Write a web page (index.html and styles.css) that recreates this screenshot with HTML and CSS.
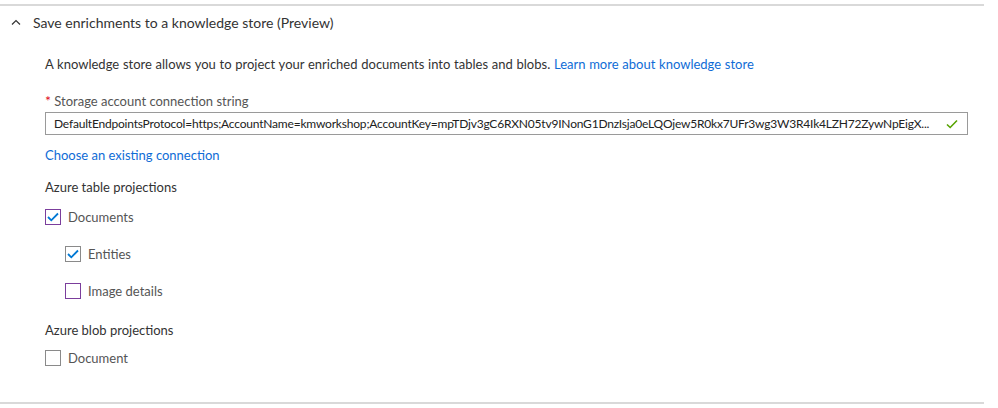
FILE: index.html
```html
<!DOCTYPE html>
<html>
<head>
<meta charset="utf-8">
<link rel="stylesheet" href="styles.css">
</head>
<body>
<div class="section">
  <div class="header">
    <svg class="chevron" width="10" height="6" viewBox="0 0 10 6"><path d="M1 5.5 L5 1.5 L9 5.5" fill="none" stroke="#333" stroke-width="1.2"/></svg>
    <span class="title">Save enrichments to a knowledge store (Preview)</span>
  </div>
  <div class="content">
    <p class="desc">A knowledge store allows you to project your enriched documents into tables and blobs. <a class="link">Learn more about knowledge store</a></p>
    <div class="label"><span class="req">*</span> Storage account connection string</div>
    <div class="input">
      <span class="value">DefaultEndpointsProtocol=https;AccountName=kmworkshop;AccountKey=mpTDjv3gC6RXN05tv9INonG1DnzIsja0eLQOjew5R0kx7UFr3wg3W3R4Ik4LZH72ZywNpEigX...</span>
      <svg class="ok" width="12" height="10" viewBox="0 0 12 10"><path d="M1 5.5 L4.2 8.5 L11 1.5" fill="none" stroke="#57a300" stroke-width="1.6"/></svg>
    </div>
    <a class="link choose">Choose an existing connection</a>
    <div class="group">Azure table projections</div>
    <div class="check lvl0">
      <span class="box focus"><svg width="12" height="10" viewBox="0 0 12 10"><path d="M1 5 L4.3 8.3 L11 1.5" fill="none" stroke="#0078d4" stroke-width="1.8"/></svg></span>
      <span class="clabel">Documents</span>
    </div>
    <div class="check lvl1">
      <span class="box"><svg width="12" height="10" viewBox="0 0 12 10"><path d="M1 5 L4.3 8.3 L11 1.5" fill="none" stroke="#0078d4" stroke-width="1.8"/></svg></span>
      <span class="clabel">Entities</span>
    </div>
    <div class="check lvl1">
      <span class="box focus"></span>
      <span class="clabel">Image details</span>
    </div>
    <div class="group blob">Azure blob projections</div>
    <div class="check lvl0 last">
      <span class="box"></span>
      <span class="clabel">Document</span>
    </div>
  </div>
</div>
</body>
</html>
```
FILE: styles.css
```css
html, body {
  margin: 0;
  padding: 0;
  background: #fff;
}
body {
  font-family: "Segoe UI", Lato, "Open Sans", sans-serif;
  color: #444;
  font-size: 13px;
}
.section {
  margin-top: 4px;
  width: 984px;
  height: 400px;
  border-top: 2px solid #d9d9d9;
  border-bottom: 2px solid #d9d9d9;
  box-sizing: border-box;
}
.header {
  display: flex;
  align-items: center;
  height: 32px;
  padding-left: 11px;
}
.chevron {
  margin-right: 12px;
}
.title {
  font-size: 14px;
  color: #333;
}
.content {
  padding-left: 45px;
  padding-right: 16px;
}
.desc {
  margin: 16px 0 0;
  line-height: 20px;
  color: #333;
  word-spacing: 0.4px;
}
.link {
  color: #0f6cd6;
  cursor: pointer;
}
.label {
  margin-top: 18px;
  line-height: 18px;
  color: #555;
}
.req {
  color: #e00b1c;
  font-size: 14px;
}
.input {
  margin-top: 2px;
  height: 23px;
  border: 1px solid #9a9a9a;
  box-sizing: border-box;
  width: 923px;
  display: flex;
  align-items: center;
  padding: 0 9px 0 8px;
  gap: 10px;
}
.value {
  flex: 1;
  min-width: 0;
  white-space: nowrap;
  overflow: hidden;
  font-size: 12px;
  letter-spacing: -0.2px;
  color: #222;
}
.ok {
  flex: none;
}
.choose {
  display: block;
  margin-top: 10px;
  line-height: 20px;
}
.group {
  margin-top: 12px;
  line-height: 20px;
  color: #333;
}
.group.blob {
  margin-top: 21px;
}
.check {
  display: flex;
  align-items: center;
  height: 16px;
  margin-top: 12px;
}
.check + .check {
  margin-top: 21px;
}
.check.last {
  margin-top: 10px;
}
.lvl1 {
  padding-left: 20px;
}
.box {
  width: 16px;
  height: 16px;
  box-sizing: border-box;
  border: 1px solid #8a8a8a;
  display: flex;
  align-items: center;
  justify-content: center;
  flex: none;
}
.box.focus {
  border-color: #7b3e9c;
}
.clabel {
  margin-left: 7px;
  color: #555;
}
```
